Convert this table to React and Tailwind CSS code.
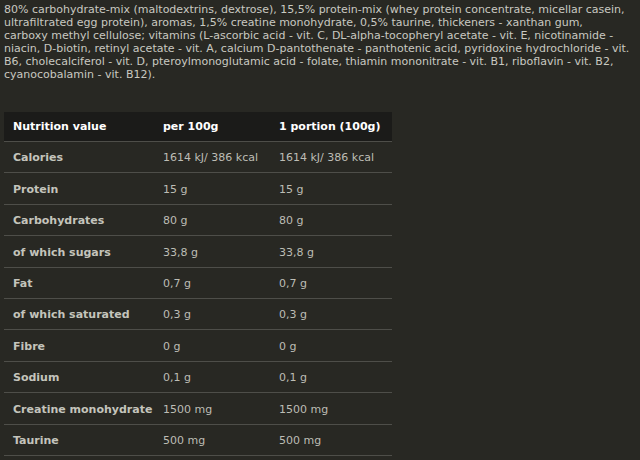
const lines = [
  "80% carbohydrate-mix (maltodextrins, dextrose), 15,5% protein-mix (whey protein concentrate, micellar casein,",
  "ultrafiltrated egg protein), aromas, 1,5% creatine monohydrate, 0,5% taurine, thickeners - xanthan gum,",
  "carboxy methyl cellulose; vitamins (L-ascorbic acid - vit. C, DL-alpha-tocopheryl acetate - vit. E, nicotinamide -",
  "niacin, D-biotin, retinyl acetate - vit. A, calcium D-pantothenate - panthotenic acid, pyridoxine hydrochloride - vit.",
  "B6, cholecalciferol - vit. D, pteroylmonoglutamic acid - folate, thiamin mononitrate - vit. B1, riboflavin - vit. B2,",
  "cyanocobalamin - vit. B12).",
];

const rows = [
  ["Calories", "1614 kJ/ 386 kcal", "1614 kJ/ 386 kcal"],
  ["Protein", "15 g", "15 g"],
  ["Carbohydrates", "80 g", "80 g"],
  ["of which sugars", "33,8 g", "33,8 g"],
  ["Fat", "0,7 g", "0,7 g"],
  ["of which saturated", "0,3 g", "0,3 g"],
  ["Fibre", "0 g", "0 g"],
  ["Sodium", "0,1 g", "0,1 g"],
  ["Creatine monohydrate", "1500 mg", "1500 mg"],
  ["Taurine", "500 mg", "500 mg"],
];

export default function App() {
  return (
    <div className="w-[640px] h-[460px] overflow-hidden bg-[#282823] font-['DejaVu_Sans',sans-serif] text-[11px]">
      {/* ingredients */}
      <div className="pl-[4px] pt-[3px] text-[#c9c9c1] leading-[13px]">
        {lines.map((l, i) => (
          <div key={i} className="whitespace-nowrap">{l}</div>
        ))}
      </div>

      {/* nutrition table */}
      <div className="ml-[4px] mt-[31px] w-[388px]">
        <div className="flex items-center h-[30px] pt-[2px] bg-[#1b1b19] text-white font-bold border-b border-[#4e4e49]">
          <div className="w-[150px] pl-[9px]">Nutrition value</div>
          <div className="w-[116px] pl-[9px]">per 100g</div>
          <div className="flex-1 pl-[9px]">1 portion (100g)</div>
        </div>
        {rows.map(([a, b, c]) => (
          <div key={a} className="flex items-center h-[31.4px] pt-[3px] border-b border-[#4e4e49]">
            <div className="w-[150px] pl-[9px] font-bold text-[#c4c4bc]">{a}</div>
            <div className="w-[116px] pl-[9px] text-[#bdbdb5]">{b}</div>
            <div className="flex-1 pl-[9px] text-[#bdbdb5]">{c}</div>
          </div>
        ))}
      </div>
    </div>
  );
}
